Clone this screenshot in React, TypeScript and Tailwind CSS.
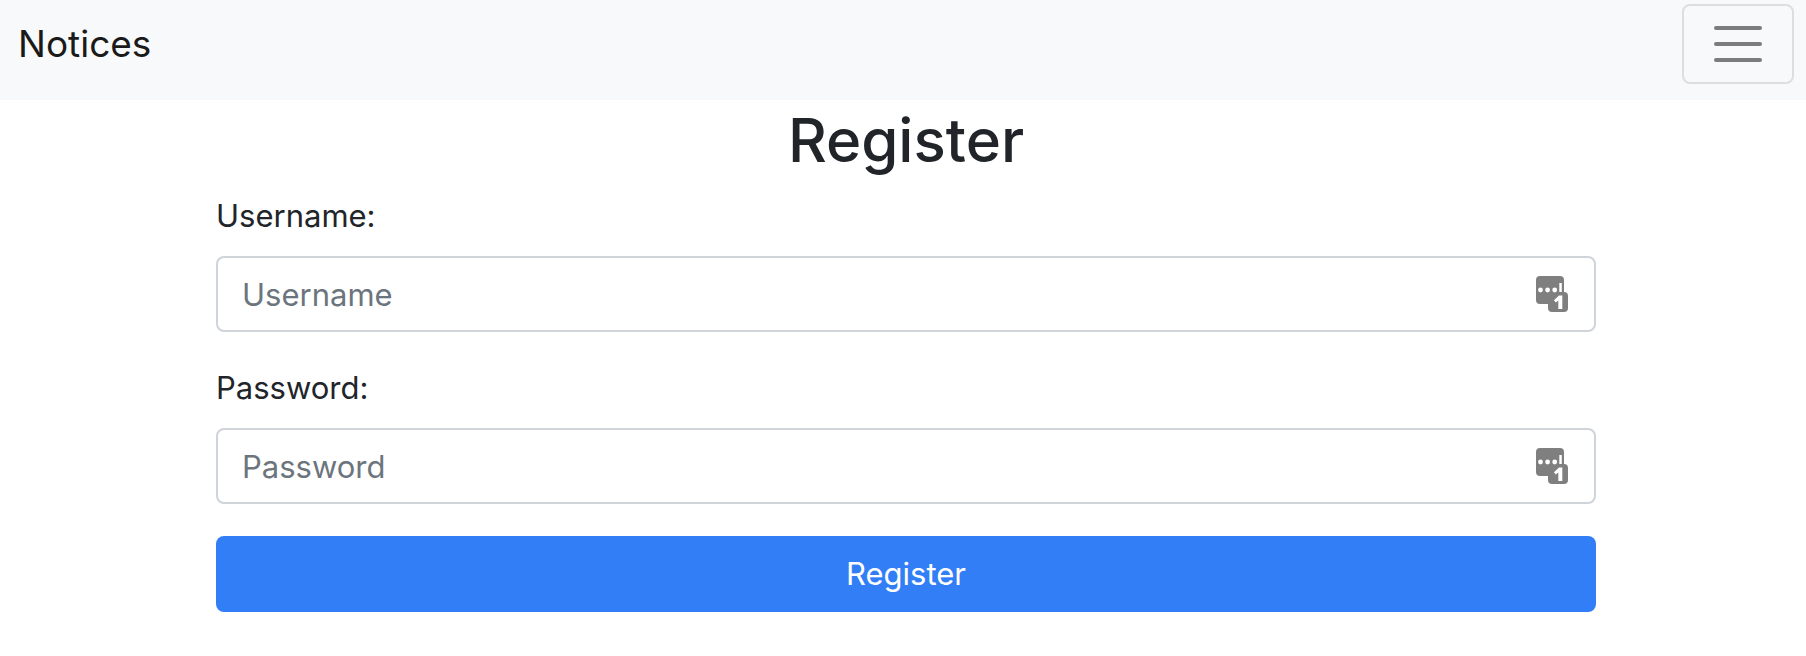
function CredentialIcon() {
  return (
    <svg viewBox="0 0 32 36" className="h-9 w-8" aria-hidden="true">
      <path
        fill="#7f7f7f"
        d="M4 0h20a4 4 0 0 1 4 4v12a4 4 0 0 1 4 4v12a4 4 0 0 1-4 4H16a4 4 0 0 1-4-4v-4H4a4 4 0 0 1-4-4V4a4 4 0 0 1 4-4z"
      />
      <circle cx="4.5" cy="14" r="2.4" fill="#fff" />
      <circle cx="11.6" cy="14" r="2.4" fill="#fff" />
      <circle cx="18.7" cy="14" r="2.4" fill="#fff" />
      <path fill="#fff" d="M23.3 7h2.5v9h-2.5z" />
      <path fill="#fff" d="M23 19.5h3.3V33h-4V24.6l-2.6 2-1.7-2.4z" />
    </svg>
  );
}

type FieldProps = { id: string; label: string; placeholder: string; type: string };

function Field({ id, label, placeholder, type }: FieldProps) {
  return (
    <div className="mb-8">
      <label htmlFor={id} className="mb-4 block leading-12">
        {label}
      </label>
      <div className="relative">
        <input
          id={id}
          name={id}
          type={type}
          placeholder={placeholder}
          className="block h-19 w-full rounded-lg border-2 border-[#ced4da] bg-white pr-20 pl-6 placeholder:text-[#6c757d] placeholder:opacity-100"
        />
        <span className="pointer-events-none absolute inset-y-0 right-7 flex items-center">
          <CredentialIcon />
        </span>
      </div>
    </div>
  );
}

export default function App() {
  return (
    <div className="bg-white font-['Inter',sans-serif] text-[31px] text-[#212529]">
      <nav className="flex items-start justify-between bg-[#f8f9fb] pt-1 pr-3 pb-4 pl-[18px]">
        <a href="#" className="text-[37px] leading-20 text-[#1a1a1a]">
          Notices
        </a>
        <button
          type="button"
          aria-label="Toggle navigation"
          className="flex h-20 w-28 items-center justify-center rounded-lg border-2 border-[#dddee0]"
        >
          <svg viewBox="0 0 48 36" className="h-9 w-12" aria-hidden="true">
            <path d="M2 2h44M2 18h44M2 34h44" stroke="#7c7c7d" strokeWidth="4" strokeLinecap="round" />
          </svg>
        </button>
      </nav>
      <main className="pr-[210px] pl-[216px]">
        <h1 className="mb-4 pt-1 text-center text-[60px] leading-[72px] font-medium">Register</h1>
        <form>
          <Field id="username" label="Username:" placeholder="Username" type="text" />
          <Field id="password" label="Password:" placeholder="Password" type="password" />
          <button type="submit" className="block h-19 w-full rounded-lg bg-[#317ef6] text-white">
            Register
          </button>
        </form>
      </main>
    </div>
  );
}
